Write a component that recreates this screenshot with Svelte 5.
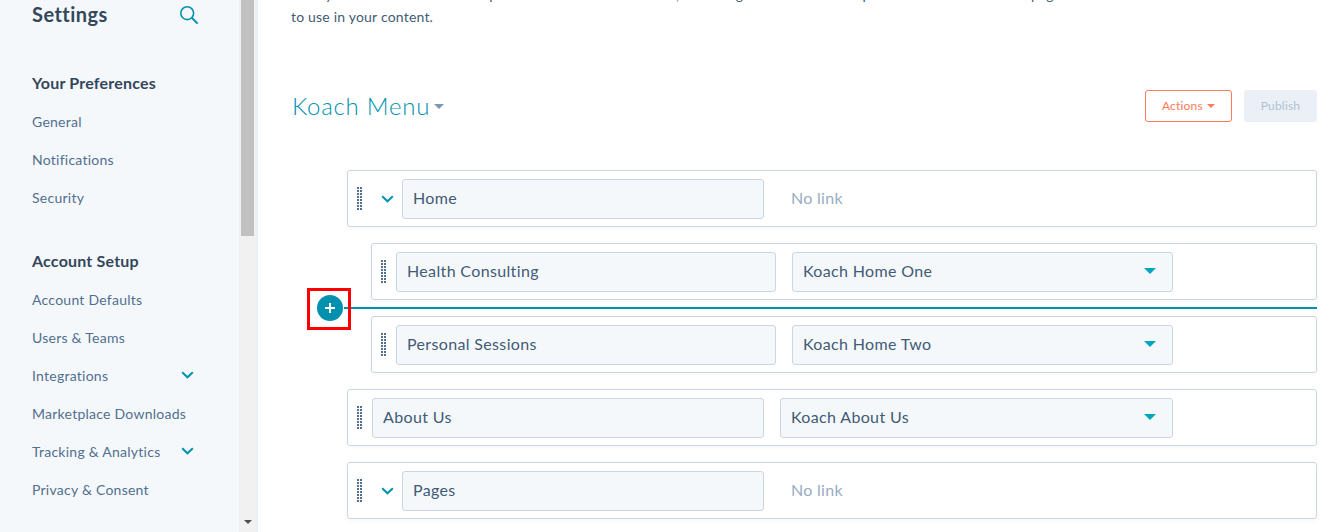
<script>
  const menus = [
    {
      title: 'Your Preferences',
      links: [{ label: 'General' }, { label: 'Notifications' }, { label: 'Security' }]
    },
    {
      title: 'Account Setup',
      links: [
        { label: 'Account Defaults' },
        { label: 'Users & Teams' },
        { label: 'Integrations', more: true },
        { label: 'Marketplace Downloads' },
        { label: 'Tracking & Analytics', more: true },
        { label: 'Privacy & Consent' }
      ]
    }
  ];

  const rows = [
    { name: 'Home', collapsible: true },
    { name: 'Health Consulting', page: 'Koach Home One', child: true },
    { name: 'Personal Sessions', page: 'Koach Home Two', child: true },
    { name: 'About Us', page: 'Koach About Us' },
    { name: 'Pages', collapsible: true }
  ];
</script>

{#snippet chevron()}
  <svg class="chevron" width="13" height="8" viewBox="0 0 13 8" aria-hidden="true">
    <path d="M1.2 1.2 6.5 6.3l5.3-5.1" fill="none" stroke="#0091ae" stroke-width="2" />
  </svg>
{/snippet}

<div class="page">
  <aside class="sidebar">
    <div class="side-head">
      <h1>Settings</h1>
      <svg width="20" height="20" viewBox="0 0 20 20" aria-hidden="true">
        <circle cx="8.2" cy="8.2" r="6.4" fill="none" stroke="#0091ae" stroke-width="1.6" />
        <path d="M12.8 12.8 18.6 18.6" stroke="#0091ae" stroke-width="2" />
      </svg>
    </div>

    {#each menus as menu}
      <section class="menu">
        <h2>{menu.title}</h2>
        {#each menu.links as link}
          <div class="link">
            <span>{link.label}</span>
            {#if link.more}{@render chevron()}{/if}
          </div>
        {/each}
      </section>
    {/each}
  </aside>

  <div class="scrollbar">
    <div class="thumb"></div>
    <div class="arrow"></div>
  </div>

  <main>
    <p class="intro">
      <span class="cut">Here you can add the links and pick or edit them in the menu, then drag an item to a new spot on the list or choose a page from the site</span>
      to use in your content.
    </p>

    <header class="title-row">
      <div class="title">
        Koach Menu
        <span class="title-caret"></span>
      </div>
      <div class="actions">
        <button class="btn-actions">Actions <span class="btn-caret"></span></button>
        <button class="btn-publish" disabled>Publish</button>
      </div>
    </header>

    <div class="list">
      {#each rows as row}
        <div class="row" class:child={row.child}>
          <div class="grip"></div>
          {#if row.collapsible}
            <div class="toggle">{@render chevron()}</div>
          {/if}
          <div class="field name" class:wide={!row.child && row.page}>{row.name}</div>
          {#if row.page}
            <div class="field select">
              {row.page}
              <span class="select-caret"></span>
            </div>
          {:else}
            <div class="no-link">No link</div>
          {/if}
        </div>
      {/each}

      <div class="insert">
        <div class="insert-box">
          <div class="plus">
            <svg width="10" height="10" viewBox="0 0 10 10" aria-hidden="true">
              <path d="M5 0v10M0 5h10" stroke="#fff" stroke-width="2" />
            </svg>
          </div>
        </div>
        <div class="insert-line"></div>
      </div>
    </div>
  </main>
</div>

<style>
  :global(body) {
    margin: 0;
    background: #fff;
  }

  .page {
    display: flex;
    height: 532px;
    overflow: hidden;
    font-family: Lato, "Open Sans", sans-serif;
    font-size: 14px;
    letter-spacing: 0.2px;
    color: #33475b;
  }

  .sidebar {
    width: 239px;
    flex: none;
    box-sizing: border-box;
    padding: 0 32px;
    background: #f5f8fa;
  }

  .side-head {
    display: flex;
    justify-content: space-between;
    align-items: flex-start;
    height: 26px;
    padding-right: 8px;
    margin-bottom: 42px;
  }

  .side-head svg {
    margin-top: 5px;
  }

  h1 {
    margin: 0;
    font-size: 20px;
    font-weight: 700;
    line-height: 28px;
    letter-spacing: 0.45px;
  }

  .menu {
    margin-bottom: 30px;
  }

  h2 {
    margin: 0;
    font-size: 16px;
    font-weight: 700;
    line-height: 30px;
    letter-spacing: 0.2px;
  }

  .link {
    display: flex;
    justify-content: space-between;
    align-items: center;
    height: 38px;
    padding-right: 13px;
    color: #516f90;
    font-size: 14px;
    letter-spacing: 0.25px;
  }

  .link:first-of-type {
    margin-top: 4px;
  }

  .scrollbar {
    position: relative;
    width: 17px;
    flex: none;
    background: #f1f1f1;
    border-right: 2px solid #eaf0f6;
  }

  .thumb {
    width: 13px;
    height: 236px;
    margin-left: 2px;
    background: #c1c1c1;
  }

  .arrow {
    position: absolute;
    left: 5px;
    bottom: 8px;
    border-left: 4px solid transparent;
    border-right: 4px solid transparent;
    border-top: 4px solid #505050;
  }

  main {
    flex: 1;
    min-width: 0;
    padding: 0 21px 0 33px;
  }

  .intro {
    margin: -16px 0 0;
    font-size: 14px;
    line-height: 22px;
    color: #425b76;
  }

  .cut {
    display: block;
    white-space: nowrap;
    overflow: hidden;
  }

  .title-row {
    display: flex;
    justify-content: space-between;
    align-items: center;
    margin-top: 62px;
    height: 32px;
  }

  .title {
    display: flex;
    align-items: center;
    gap: 4px;
    margin-left: 1px;
    padding-bottom: 2px;
    font-size: 24px;
    font-weight: 300;
    letter-spacing: 0.75px;
    color: #0091ae;
  }

  .title-caret {
    margin-top: 2px;
    border-left: 5px solid transparent;
    border-right: 5px solid transparent;
    border-top: 5px solid #7c98b6;
  }

  .actions {
    display: flex;
    gap: 12px;
  }

  button {
    height: 32px;
    box-sizing: border-box;
    border-radius: 3px;
    font-family: inherit;
    font-size: 12px;
    letter-spacing: 0.2px;
    padding: 0 0 2px;
  }

  .btn-actions {
    width: 87px;
    border: 1px solid #ff7a59;
    background: #fff;
    color: #ff7a59;
  }

  .btn-caret {
    display: inline-block;
    margin-left: 1px;
    vertical-align: 2px;
    border-left: 4px solid transparent;
    border-right: 4px solid transparent;
    border-top: 4px solid #ff7a59;
  }

  .btn-publish {
    width: 73px;
    border: none;
    background: #eaf0f6;
    color: #b0c1d4;
  }

  .list {
    position: relative;
    display: flex;
    flex-direction: column;
    gap: 16px;
    margin-top: 48px;
    padding-left: 56px;
  }

  .row {
    display: flex;
    align-items: center;
    box-sizing: border-box;
    height: 57px;
    padding-left: 9px;
    border: 1px solid #cbd6e2;
    border-radius: 3px;
    background: #fff;
    box-shadow: 0 1px 4px rgba(45, 62, 80, 0.05);
  }

  .row.child {
    margin-left: 24px;
  }

  .grip {
    width: 5px;
    height: 23px;
    flex: none;
    margin-right: 10px;
    background-image: radial-gradient(circle at 1px 1px, #516f90 1.2px, transparent 1.3px);
    background-size: 3px 3px;
  }

  .toggle {
    width: 30px;
    flex: none;
    display: flex;
    justify-content: center;
  }

  .chevron {
    display: block;
  }

  .field {
    box-sizing: border-box;
    height: 40px;
    display: flex;
    align-items: center;
    padding: 0 10px 2px;
    border: 1px solid #cbd6e2;
    border-radius: 3px;
    background: #f5f8fa;
    font-size: 16px;
    letter-spacing: 0.35px;
    color: #425b76;
  }

  .name {
    width: 362px;
  }

  .name.wide {
    width: 392px;
  }

  .row.child .name {
    width: 380px;
  }

  .select {
    width: 393px;
    margin-left: 16px;
    justify-content: space-between;
  }

  .row.child .select {
    width: 381px;
  }

  .select-caret {
    margin: 1px 6px 0 0;
    border-left: 6px solid transparent;
    border-right: 6px solid transparent;
    border-top: 6px solid #00a4bd;
  }

  .no-link {
    margin: -2px 0 0 27px;
    font-size: 16px;
    letter-spacing: 0.3px;
    color: #99acc2;
  }

  /* sits over the gap between the two child rows */
  .insert {
    position: absolute;
    left: 16px;
    right: 0;
    top: 118px;
    display: flex;
    align-items: center;
  }

  .insert-box {
    position: relative;
    z-index: 1;
    box-sizing: border-box;
    width: 44px;
    height: 42px;
    flex: none;
    display: flex;
    align-items: center;
    justify-content: center;
    padding: 0 0 2px 2px;
    border: 3px solid #f00;
  }

  .plus {
    width: 26px;
    height: 26px;
    flex: none;
    border-radius: 50%;
    background: #0091ae;
    display: flex;
    align-items: center;
    justify-content: center;
  }

  .insert-line {
    flex: 1;
    height: 2px;
    margin: -2px 0 0 -7px;
    background: #0091ae;
  }
</style>
